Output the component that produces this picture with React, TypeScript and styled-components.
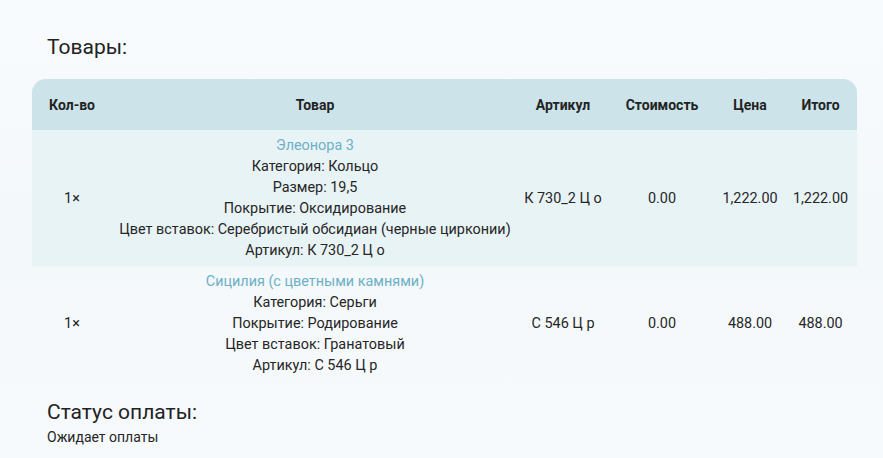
import React from "react";
import styled, { createGlobalStyle } from "styled-components";

const Global = createGlobalStyle`
  html, body { margin: 0; padding: 0; }
  body {
    font-family: Roboto, "Noto Sans", sans-serif;
    background: linear-gradient(180deg, #f8fbfd 0%, #f3f8fa 50%, #f7fafc 100%);
    color: #262626;
    min-height: 458px;
  }
`;

const Page = styled.div`
  padding: 34px 26px 0 32px;
  width: 825px;
`;

const Title = styled.h2`
  margin: 0 0 19px 15px;
  font-size: 21px;
  font-weight: 400;
  line-height: 26px;
  color: #222;
`;

const Table = styled.table`
  width: 825px;
  border-collapse: separate;
  border-spacing: 0;
  table-layout: fixed;
  font-size: 14.4px;
`;

const HeadCell = styled.th<{ $align?: string }>`
  height: 51px;
  padding: 0;
  background: #cce3ea;
  font-weight: 700;
  font-size: 14px;
  color: #232323;
  text-align: ${(p) => p.$align || "center"};
  &:first-child { border-top-left-radius: 14px; }
  &:last-child { border-top-right-radius: 14px; }
`;

const Row = styled.tr<{ $shaded?: boolean }>`
  background: ${(p) => (p.$shaded ? "#e8f3f6" : "transparent")};
`;

const Cell = styled.td`
  padding: 5px 0;
  text-align: center;
  vertical-align: middle;
  line-height: 21px;
  color: #262626;
`;

const ProductName = styled.div`
  color: #6db0c6;
`;

const Line = styled.div``;

const Section = styled.div`
  margin: 19px 0 0 15px;
`;

const SectionTitle = styled.h3`
  margin: 0;
  font-size: 21px;
  font-weight: 400;
  line-height: 24px;
  color: #222;
`;

const SectionText = styled.div`
  margin-top: 4px;
  font-size: 14px;
  line-height: 18px;
  color: #262626;
`;

type Item = {
  qty: string;
  name: string;
  lines: string[];
  sku: string;
  cost: string;
  price: string;
  total: string;
};

const items: Item[] = [
  {
    qty: "1×",
    name: "Элеонора 3",
    lines: [
      "Категория: Кольцо",
      "Размер: 19,5",
      "Покрытие: Оксидирование",
      "Цвет вставок: Серебристый обсидиан (черные цирконии)",
      "Артикул: К 730_2 Ц о",
    ],
    sku: "К 730_2 Ц о",
    cost: "0.00",
    price: "1,222.00",
    total: "1,222.00",
  },
  {
    qty: "1×",
    name: "Сицилия (с цветными камнями)",
    lines: [
      "Категория: Серьги",
      "Покрытие: Родирование",
      "Цвет вставок: Гранатовый",
      "Артикул: С 546 Ц р",
    ],
    sku: "С 546 Ц р",
    cost: "0.00",
    price: "488.00",
    total: "488.00",
  },
];

const widths = [80, 406, 90, 108, 68, 73];

export default function App() {
  return (
    <>
      <Global />
      <Page>
        <Title>Товары:</Title>
        <Table>
          <colgroup>
            {widths.map((w, i) => (
              <col key={i} style={{ width: w }} />
            ))}
          </colgroup>
          <thead>
            <tr>
              <HeadCell>Кол-во</HeadCell>
              <HeadCell>Товар</HeadCell>
              <HeadCell>Артикул</HeadCell>
              <HeadCell>Стоимость</HeadCell>
              <HeadCell>Цена</HeadCell>
              <HeadCell>Итого</HeadCell>
            </tr>
          </thead>
          <tbody>
            {items.map((it, i) => (
              <Row key={i} $shaded={i % 2 === 0}>
                <Cell>{it.qty}</Cell>
                <Cell>
                  <ProductName>{it.name}</ProductName>
                  {it.lines.map((l, j) => (
                    <Line key={j}>{l}</Line>
                  ))}
                </Cell>
                <Cell>{it.sku}</Cell>
                <Cell>{it.cost}</Cell>
                <Cell>{it.price}</Cell>
                <Cell>{it.total}</Cell>
              </Row>
            ))}
          </tbody>
        </Table>
        <Section>
          <SectionTitle>Статус оплаты:</SectionTitle>
          <SectionText>Ожидает оплаты</SectionText>
        </Section>
      </Page>
    </>
  );
}
